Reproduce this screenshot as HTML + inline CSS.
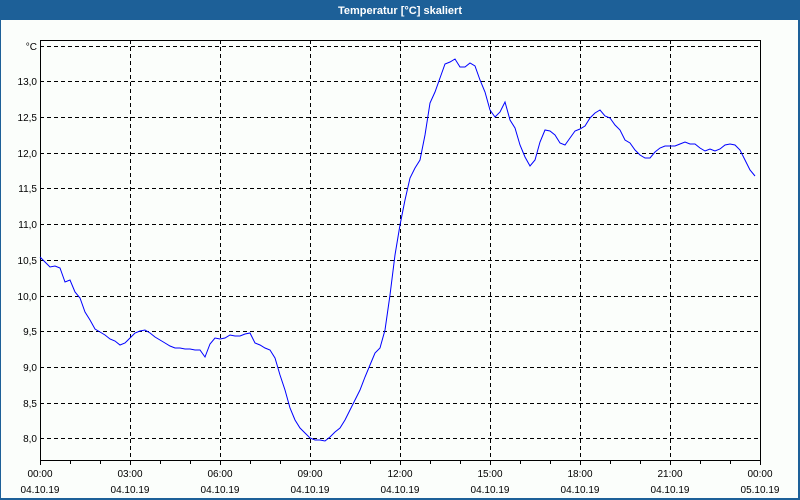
<!DOCTYPE html>
<html><head><style>
body{margin:0;width:800px;height:500px;overflow:hidden;background:#fbfefb;font-family:"Liberation Sans",sans-serif}
</style></head><body>
<svg width="800" height="500" xmlns="http://www.w3.org/2000/svg" style="display:block">
<rect x="0" y="0" width="800" height="500" fill="#fbfefb"/>
<rect x="0" y="0" width="800" height="20" fill="#1d6098"/>
<rect x="0" y="20" width="1" height="480" fill="#1d6098"/>
<rect x="798" y="20" width="2" height="480" fill="#1d6098"/>
<rect x="0" y="498" width="800" height="2" fill="#1d6098"/>
<text x="400" y="14" fill="#fff" font-size="11" font-weight="bold" text-anchor="middle">Temperatur [°C] skaliert</text>
<g stroke="#000" stroke-width="1" stroke-dasharray="4,3" fill="none">
<path d="M40 46.5H760M40 81.5H760M40 117.5H760M40 153.5H760M40 188.5H760M40 224.5H760M40 260.5H760M40 296.5H760M40 331.5H760M40 367.5H760M40 403.5H760M40 438.5H760"/>
<path d="M130.5 40V460M220.5 40V460M310.5 40V460M400.5 40V460M490.5 40V460M580.5 40V460M670.5 40V460"/>
</g>
<rect x="40.5" y="40.5" width="720" height="420" fill="none" stroke="#000" stroke-width="1"/>
<g stroke="#000"><path d="M40.5 460v5M70.5 460v4M100.5 460v4M130.5 460v5M160.5 460v4M190.5 460v4M220.5 460v5M250.5 460v4M280.5 460v4M310.5 460v5M340.5 460v4M370.5 460v4M400.5 460v5M430.5 460v4M460.5 460v4M490.5 460v5M520.5 460v4M550.5 460v4M580.5 460v5M610.5 460v4M640.5 460v4M670.5 460v5M700.5 460v4M730.5 460v4M760.5 460v5"/></g>
<g font-size="10" fill="#000" text-anchor="end">
<text x="37" y="50">°C</text><text x="37" y="85">13,0</text><text x="37" y="121">12,5</text><text x="37" y="157">12,0</text><text x="37" y="192">11,5</text><text x="37" y="228">11,0</text><text x="37" y="264">10,5</text><text x="37" y="300">10,0</text><text x="37" y="335">9,5</text><text x="37" y="371">9,0</text><text x="37" y="407">8,5</text><text x="37" y="442">8,0</text>
</g>
<g font-size="10" fill="#000" text-anchor="middle">
<text x="40" y="477">00:00</text><text x="40" y="493">04.10.19</text>
<text x="130" y="477">03:00</text><text x="130" y="493">04.10.19</text>
<text x="220" y="477">06:00</text><text x="220" y="493">04.10.19</text>
<text x="310" y="477">09:00</text><text x="310" y="493">04.10.19</text>
<text x="400" y="477">12:00</text><text x="400" y="493">04.10.19</text>
<text x="490" y="477">15:00</text><text x="490" y="493">04.10.19</text>
<text x="580" y="477">18:00</text><text x="580" y="493">04.10.19</text>
<text x="670" y="477">21:00</text><text x="670" y="493">04.10.19</text>
<text x="760" y="477">00:00</text><text x="760" y="493">05.10.19</text>
</g>
<polyline fill="none" stroke="#0000ff" stroke-width="1" points="40,257 45,262 50,267 55,266 60,268 65,282 70,280 75,292 80,298 85,312 90,320 95,329 100,332 105,335 110,339 115,341 120,345 125,343 130,338 135,333 140,331 145,330 150,333 155,337 160,340 165,343 170,346 175,348 180,348 185,349 190,349 195,350 200,350 205,357 210,344 215,338 220,339 225,338 230,335 235,336 240,336 245,334 250,333 255,343 260,345 265,348 270,350 275,358 280,375 285,390 290,408 295,420 300,428 305,433 310,438 315,440 320,440 325,441 330,437 335,432 340,428 345,420 350,410 355,400 360,390 365,377 370,365 375,353 380,348 385,330 390,295 395,255 400,225 405,200 410,178 415,168 420,160 425,135 430,103 435,92 440,78 445,64 450,62 455,59 460,67 465,67 470,63 475,66 480,80 485,92 490,110 495,117 500,112 505,102 510,120 515,128 520,145 525,157 530,166 535,160 540,142 545,130 550,131 555,135 560,143 565,145 570,138 575,131 580,129 585,126 590,118 595,113 600,110 605,116 610,118 615,125 620,130 625,140 630,143 635,150 640,155 645,158 650,158 655,152 660,148 665,146 670,146 675,146 680,144 685,142 690,144 695,144 700,148 705,151 710,149 715,151 720,149 725,145 730,144 735,145 740,150 745,160 750,170 755,176"/>
</svg>
</body></html>
